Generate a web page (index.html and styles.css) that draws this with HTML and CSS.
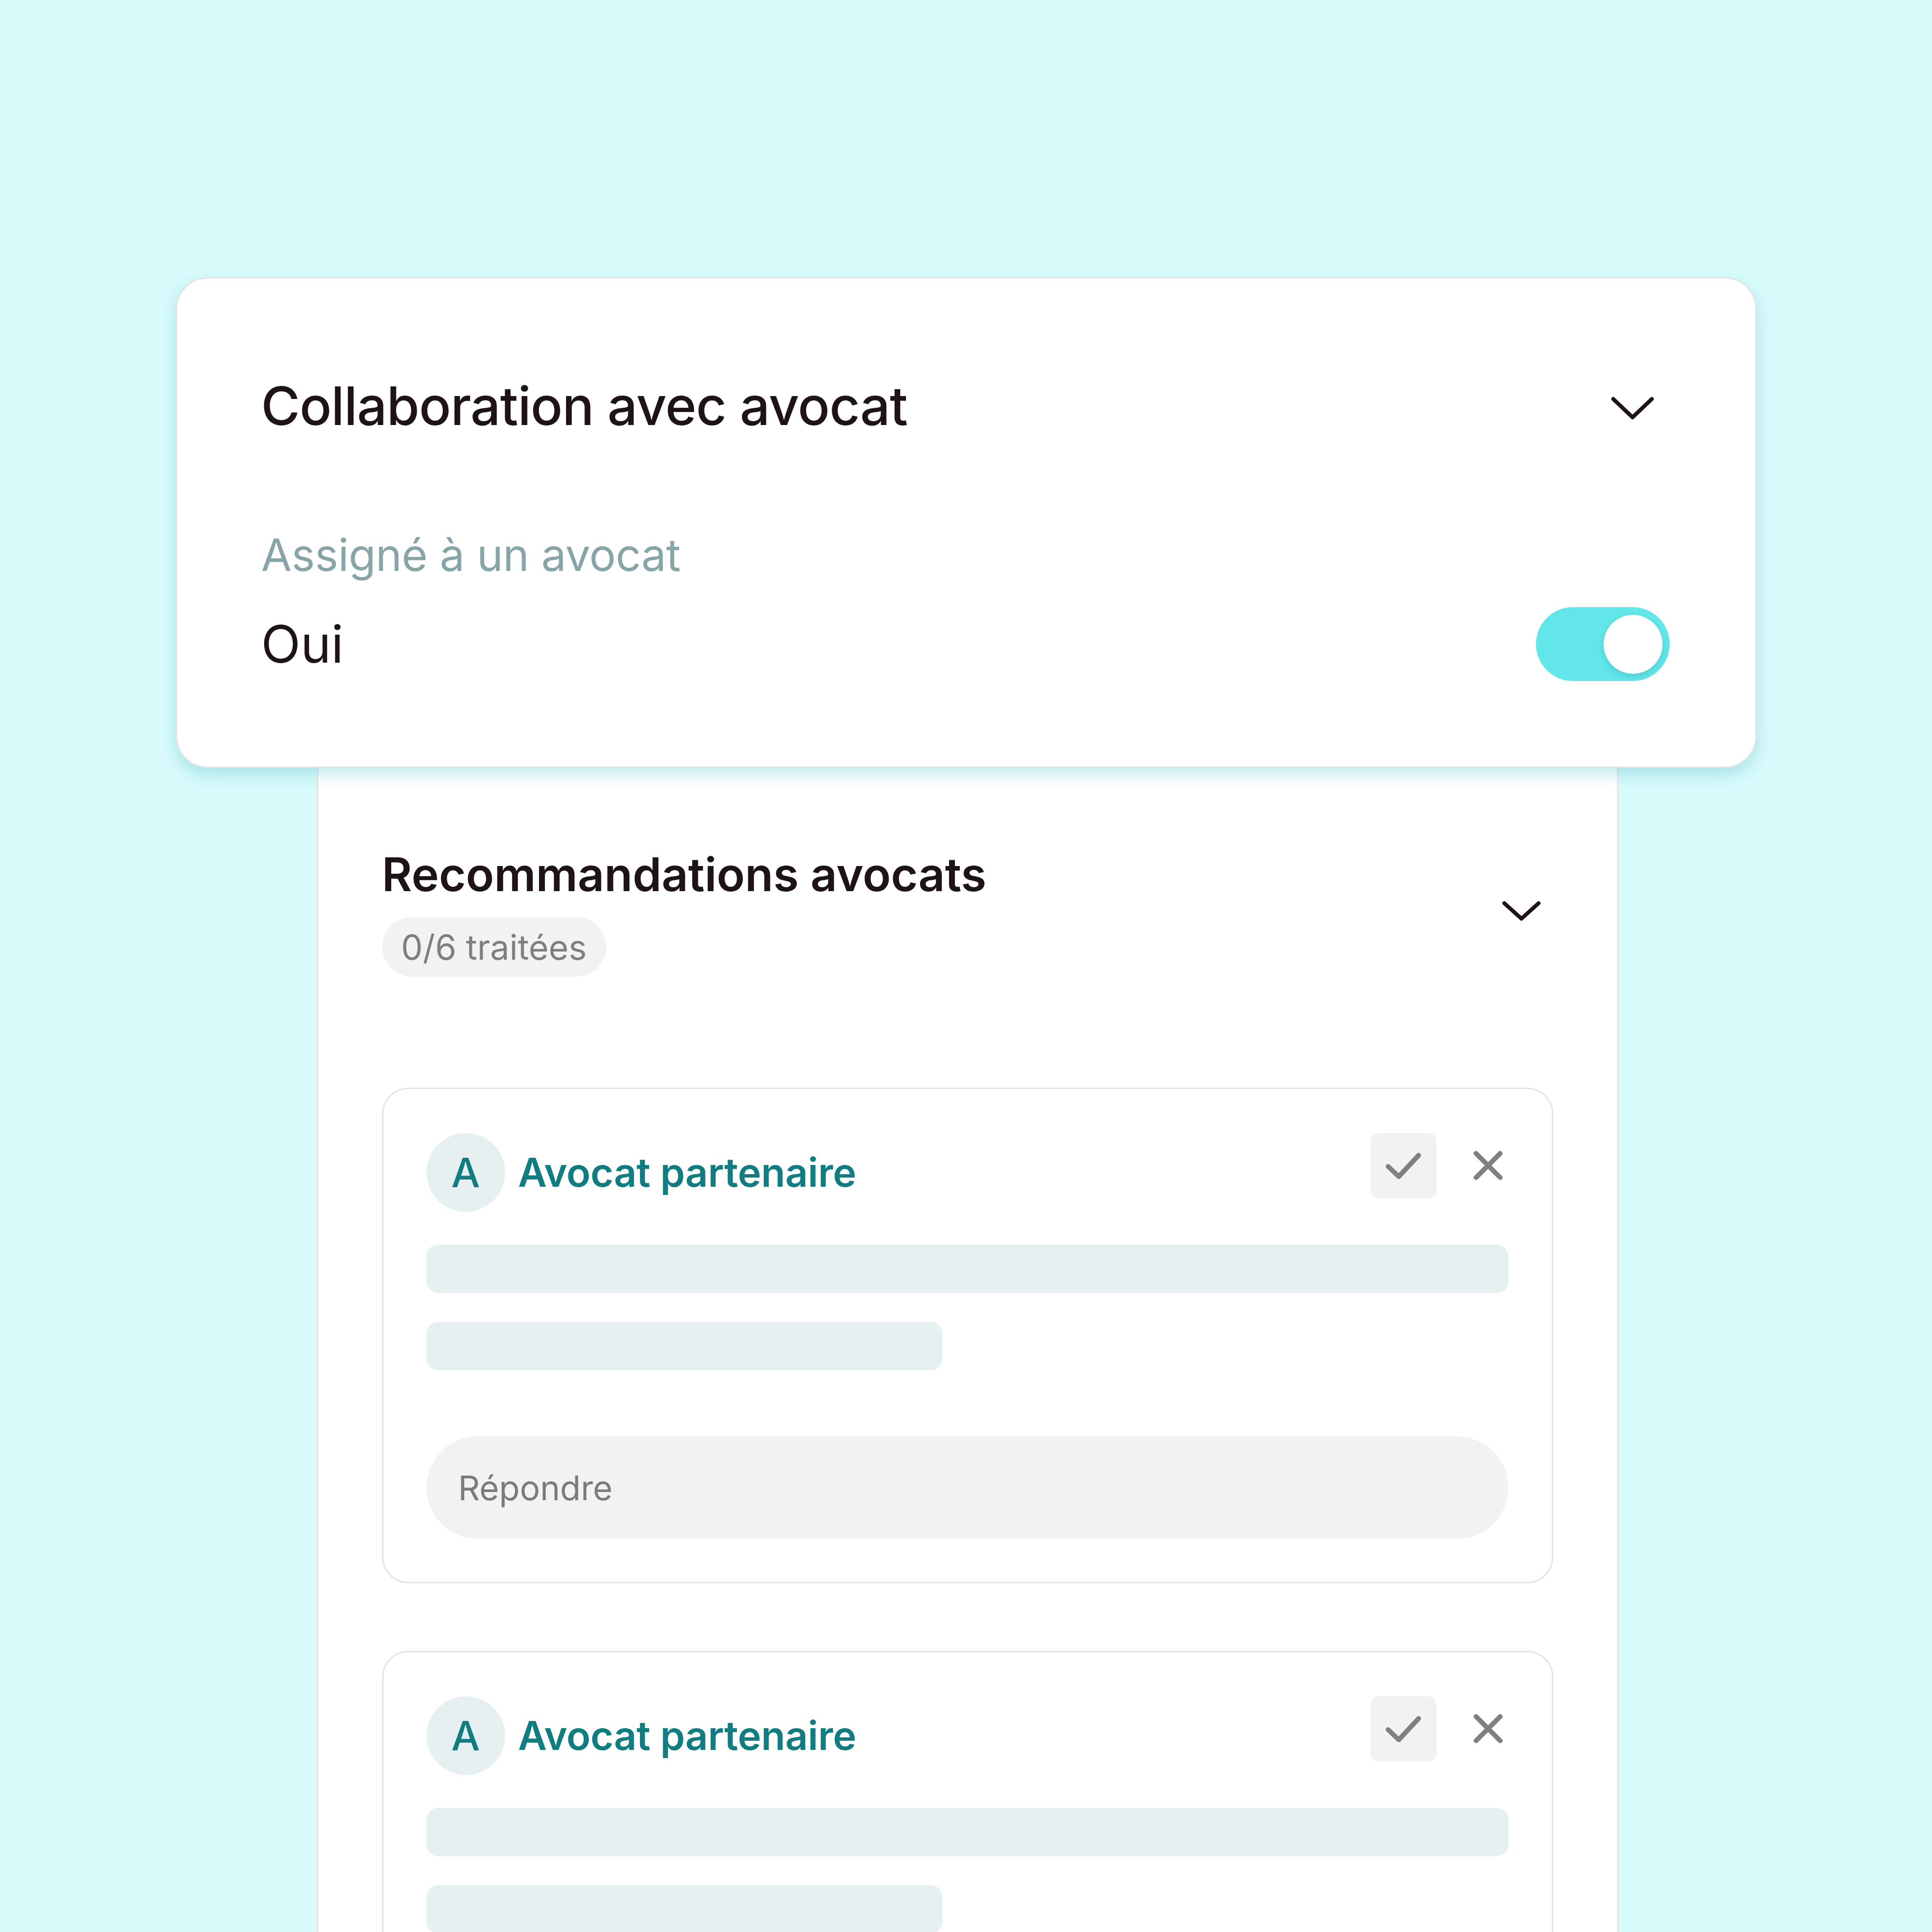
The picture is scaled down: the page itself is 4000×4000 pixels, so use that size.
FILE: index.html
```html
<!DOCTYPE html>
<html lang="fr">
<head>
<meta charset="utf-8">
<title>Collaboration avec avocat</title>
<link rel="stylesheet" href="styles.css">
</head>
<body>
<main class="stage">
  <section class="main-card">
    <div class="main-head">
      <h1 class="main-title">Collaboration avec avocat</h1>
      <svg class="chev chev-lg" viewBox="0 0 96 54" aria-hidden="true"><path d="M8 8 L48 46 L88 8" /></svg>
    </div>
    <div class="field-label">Assigné à un avocat</div>
    <div class="field-row">
      <span class="field-value">Oui</span>
      <span class="toggle"><span class="knob"></span></span>
    </div>
  </section>

  <section class="panel">
    <div class="panel-head">
      <div class="panel-head-text">
        <h2 class="panel-title">Recommandations avocats</h2>
        <span class="badge">0/6 traitées</span>
      </div>
      <svg class="chev chev-md" viewBox="0 0 86 48" aria-hidden="true"><path d="M7.5 8 L43 40 L78.5 8" /></svg>
    </div>

    <div class="rec-list">
      <article class="rec">
        <div class="rec-head">
          <div class="who">
            <span class="avatar">A</span>
            <span class="name">Avocat partenaire</span>
          </div>
          <div class="actions">
            <button class="btn-check" type="button" aria-label="Accepter">
              <svg viewBox="0 0 136 135"><path d="M36 69 L58 90 L99 46" /></svg>
            </button>
            <button class="btn-x" type="button" aria-label="Refuser">
              <svg viewBox="0 0 84 135"><path d="M17 42 L67 92 M67 42 L17 92" /></svg>
            </button>
          </div>
        </div>
        <div class="skel skel-full"></div>
        <div class="skel skel-half"></div>
        <div class="reply">Répondre</div>
      </article>

      <article class="rec">
        <div class="rec-head">
          <div class="who">
            <span class="avatar">A</span>
            <span class="name">Avocat partenaire</span>
          </div>
          <div class="actions">
            <button class="btn-check" type="button" aria-label="Accepter">
              <svg viewBox="0 0 136 135"><path d="M36 69 L58 90 L99 46" /></svg>
            </button>
            <button class="btn-x" type="button" aria-label="Refuser">
              <svg viewBox="0 0 84 135"><path d="M17 42 L67 92 M67 42 L17 92" /></svg>
            </button>
          </div>
        </div>
        <div class="skel skel-full"></div>
        <div class="skel skel-half"></div>
      </article>
    </div>
  </section>
</main>
</body>
</html>
```

FILE: styles.css
```css
* { box-sizing: border-box; }

html, body {
  margin: 0;
  padding: 0;
  height: 4000px;
  overflow: hidden;
}

body {
  background: #d8fafb;
  font-family: "Inter", "Noto Sans", sans-serif;
  color: #1e1416;
}

.stage {
  padding-top: 574px;
  display: flex;
  flex-direction: column;
  align-items: center;
}

/* ---------- top card ---------- */
.main-card {
  position: relative;
  z-index: 2;
  width: 3273px;
  background: #ffffff;
  border: 3px solid #e4e6e6;
  border-radius: 66px;
  padding: 208px 177px 177px 174px;
  box-shadow: 0 14px 30px rgba(70, 185, 190, 0.32);
}

.main-head {
  display: flex;
  align-items: center;
  justify-content: space-between;
  height: 110px;
}

.main-title {
  margin: 0;
  font-size: 110px;
  line-height: 110px;
  font-weight: 500;
  letter-spacing: -1px;
  color: #1e1416;
}

.chev {
  fill: none;
  stroke: #1e1416;
  stroke-linecap: round;
  stroke-linejoin: round;
}

.chev-lg {
  width: 96px;
  height: 54px;
  stroke-width: 8;
  margin-right: 29px;
  margin-top: 10px;
}

.field-label {
  margin-top: 208px;
  font-size: 92px;
  line-height: 92px;
  font-weight: 400;
  color: #87a4a6;
  letter-spacing: -0.4px;
}

.field-row {
  margin-top: 62px;
  display: flex;
  align-items: center;
  justify-content: space-between;
  height: 153px;
}

.field-value {
  font-size: 107px;
  line-height: 107px;
  font-weight: 400;
  color: #1e1416;
}

.toggle {
  width: 277px;
  height: 153px;
  border-radius: 77px;
  background: #63e6ea;
  display: flex;
  align-items: center;
  justify-content: flex-end;
  padding-right: 15px;
}

.knob {
  width: 122px;
  height: 122px;
  border-radius: 50%;
  background: #ffffff;
  box-shadow: 0 6px 14px rgba(20, 120, 125, 0.22);
}

/* ---------- panel ---------- */
.panel {
  position: relative;
  z-index: 1;
  width: 2695px;
  margin-top: -120px;
  margin-left: 6px;
  background: #ffffff;
  border-left: 3px solid #e3e5e5;
  border-right: 3px solid #e3e5e5;
  padding: 293px 132px 0 132px;
}

.panel-head {
  display: flex;
  align-items: center;
  justify-content: space-between;
}

.panel-head-text {
  display: flex;
  flex-direction: column;
  align-items: flex-start;
}

.panel-title {
  margin: 0;
  font-size: 96px;
  line-height: 95px;
  font-weight: 600;
  letter-spacing: 0;
  color: #1e1416;
}

.badge {
  margin-top: 41px;
  height: 123px;
  padding: 0 40px;
  border-radius: 62px;
  background: #f2f2f2;
  color: #7f7f7f;
  font-size: 71px;
  font-weight: 400;
  display: inline-flex;
  align-items: center;
}

.chev-md {
  width: 86px;
  height: 48px;
  stroke-width: 8;
  margin-right: 23px;
  margin-top: -14px;
}

.rec-list {
  margin-top: 230px;
  display: flex;
  flex-direction: column;
  gap: 140px;
}

.rec {
  border: 3px solid #e3e5e5;
  border-radius: 54px;
  padding: 91px 90px 89px 89px;
  display: flex;
  flex-direction: column;
}

.rec-head {
  display: flex;
  align-items: flex-start;
  justify-content: space-between;
}

.who {
  display: flex;
  align-items: center;
  gap: 27px;
}

.avatar {
  width: 163px;
  height: 163px;
  border-radius: 50%;
  background: #e6f0f1;
  color: #117d80;
  font-size: 84px;
  font-weight: 500;
  display: flex;
  align-items: center;
  justify-content: center;
}

.name {
  font-size: 82px;
  font-weight: 600;
  color: #117d80;
  letter-spacing: -0.2px;
}

.actions {
  display: flex;
  align-items: center;
  gap: 65px;
}

.btn-check, .btn-x {
  border: 0;
  padding: 0;
  margin: 0;
  background: transparent;
  display: block;
}

.btn-check {
  width: 136px;
  height: 135px;
  border-radius: 16px;
  background: #f2f2f2;
}

.btn-x {
  width: 84px;
  height: 135px;
}

.btn-check svg, .btn-x svg {
  display: block;
  width: 100%;
  height: 100%;
  fill: none;
  stroke: #808080;
  stroke-width: 10;
  stroke-linecap: round;
  stroke-linejoin: round;
}

.skel {
  height: 100px;
  border-radius: 24px;
  background: #e7f0f1;
}

.skel-full {
  margin-top: 68px;
  width: 100%;
}

.skel-half {
  margin-top: 60px;
  width: 1068px;
}

.reply {
  margin-top: 137px;
  height: 212px;
  border-radius: 106px;
  background: #f2f2f2;
  color: #7b7b7b;
  font-size: 70px;
  font-weight: 400;
  display: flex;
  align-items: center;
  padding-left: 66px;
}
```
